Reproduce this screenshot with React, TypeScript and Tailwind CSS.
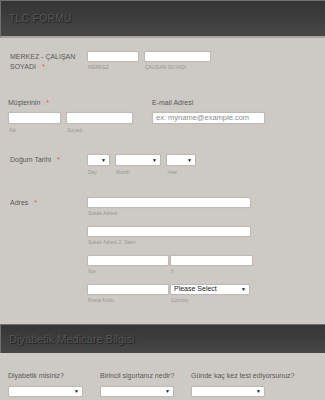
import React from 'react';

const Star = () => <span className="ml-[6px] text-[#e2514c]">*</span>;

const Sub = ({ text, className = '' }: { text: string; className?: string }) => (
  <div className={`mt-[2px] h-[6px] text-[5px] leading-[6px] text-[#9a9792] pl-[1px] whitespace-nowrap ${className}`}>{text}</div>
);

const Box = ({ className = '', children }: { className?: string; children?: React.ReactNode }) => (
  <div
    className={`bg-white border border-[#bebbb7] rounded-[2px] shadow-[0_0_1px_rgba(0,0,0,0.15)] flex items-center ${className}`}
  >
    {children}
  </div>
);

const Select = ({ className = '', text = '' }: { className?: string; text?: string }) => (
  <Box className={`justify-between px-[3px] ${className}`}>
    <span className="text-[7px] text-[#222]">{text}</span>
    <span className="text-[5px] text-[#111] leading-none">▼</span>
  </Box>
);

const SectionHeader = ({ title, className = '' }: { title: string; className?: string }) => (
  <div
    className={`flex items-center pl-[8px] bg-gradient-to-b from-[#353535] to-[#474747] border-l border-t border-[#707070] ${className}`}
  >
    <span className="text-[#565656] [text-shadow:1px_1px_1px_#1e1e1e]">{title}</span>
  </div>
);

const App = () => {
  return (
    <div className="w-[325px] h-[400px] overflow-hidden bg-[#cdcac6] font-['Liberation_Sans',sans-serif] text-[7px] text-[#5a5855]">
      <SectionHeader title="TLC FORMU" className="h-[38px] text-[10px] tracking-[0.5px] border-b-2 border-b-[#a8a5a1]" />

      {/* merkez - calisan */}
      <div className="flex mt-[13px]">
        <div className="w-[87px] pl-[10px] pt-[1px] leading-[10px]">
          MERKEZ - ÇALIŞAN
          <br />
          SOYADI
          <Star />
        </div>
        <div className="flex gap-[5px]">
          <div>
            <Box className="w-[52px] h-[11px]" />
            <Sub text="MERKEZ" />
          </div>
          <div>
            <Box className="w-[67px] h-[11px]" />
            <Sub text="ÇALIŞAN SOYADI" />
          </div>
        </div>
      </div>

      {/* musteri + email */}
      <div className="flex mt-[27px] pl-[8px]">
        <div className="w-[144px]">
          <div className="h-[8px] leading-[8px]">
            Müşterinin
            <Star />
          </div>
          <div className="flex gap-[5px] mt-[5px]">
            <div>
              <Box className="w-[53px] h-[12px]" />
              <Sub text="Adı" className="mt-[3px]" />
            </div>
            <div>
              <Box className="w-[67px] h-[12px]" />
              <Sub text="Soyadı" className="mt-[3px]" />
            </div>
          </div>
        </div>
        <div>
          <div className="h-[8px] leading-[8px]">E-mail Adresi</div>
          <Box className="w-[113px] h-[12px] mt-[5px] pl-[3px]">
            <span className="text-[7.5px] text-[#8c8c8c]">ex: myname@example.com</span>
          </Box>
        </div>
      </div>

      {/* dogum tarihi */}
      <div className="flex mt-[21px]">
        <div className="w-[87px] pl-[10px] leading-[12px]">
          Doğum Tarihi
          <Star />
        </div>
        <div className="flex gap-[5px]">
          <div>
            <Select className="w-[23px] h-[12px]" />
            <Sub text="Day" className="mt-[3px]" />
          </div>
          <div>
            <Select className="w-[46px] h-[12px]" />
            <Sub text="Month" className="mt-[3px]" />
          </div>
          <div>
            <Select className="w-[30px] h-[12px]" />
            <Sub text="Year" className="mt-[3px]" />
          </div>
        </div>
      </div>

      {/* adres */}
      <div className="flex mt-[22px]">
        <div className="w-[87px] pl-[10px] leading-[11px]">
          Adres
          <Star />
        </div>
        <div className="flex flex-col">
          <Box className="w-[164px] h-[11px]" />
          <Sub text="Sokak Adresi" className="mb-[10px]" />
          <Box className="w-[164px] h-[11px]" />
          <Sub text="Sokak Adresi 2. Satırı" className="mb-[10px]" />
          <div className="flex gap-[1px]">
            <div>
              <Box className="w-[82px] h-[11px]" />
              <Sub text="İlçe" className="mb-[10px]" />
            </div>
            <div>
              <Box className="w-[83px] h-[11px]" />
              <Sub text="İl" className="mb-[10px]" />
            </div>
          </div>
          <div className="flex gap-[1px]">
            <div>
              <Box className="w-[82px] h-[11px]" />
              <Sub text="Posta Kodu" />
            </div>
            <div>
              <Select className="w-[80px] h-[11px]" text="Please Select" />
              <Sub text="Country" />
            </div>
          </div>
        </div>
      </div>

      <SectionHeader title="Diyabetik Medicare Bilgisi" className="h-[29px] mt-[21px] text-[11px]" />

      <div className="flex mt-[19px] pl-[8px]">
        <div className="w-[92px]">
          <div className="h-[8px] leading-[8px]">Diyabetik misiniz?</div>
          <Select className="w-[75px] h-[11px] mt-[6px]" />
        </div>
        <div className="w-[91px]">
          <div className="h-[8px] leading-[8px]">Birincil sigortanız nedir?</div>
          <Select className="w-[74px] h-[11px] mt-[6px]" />
        </div>
        <div>
          <div className="h-[8px] leading-[8px]">Günde kaç kez test ediyorsunuz?</div>
          <Select className="w-[74px] h-[11px] mt-[6px]" />
        </div>
      </div>
    </div>
  );
};

export default App;
